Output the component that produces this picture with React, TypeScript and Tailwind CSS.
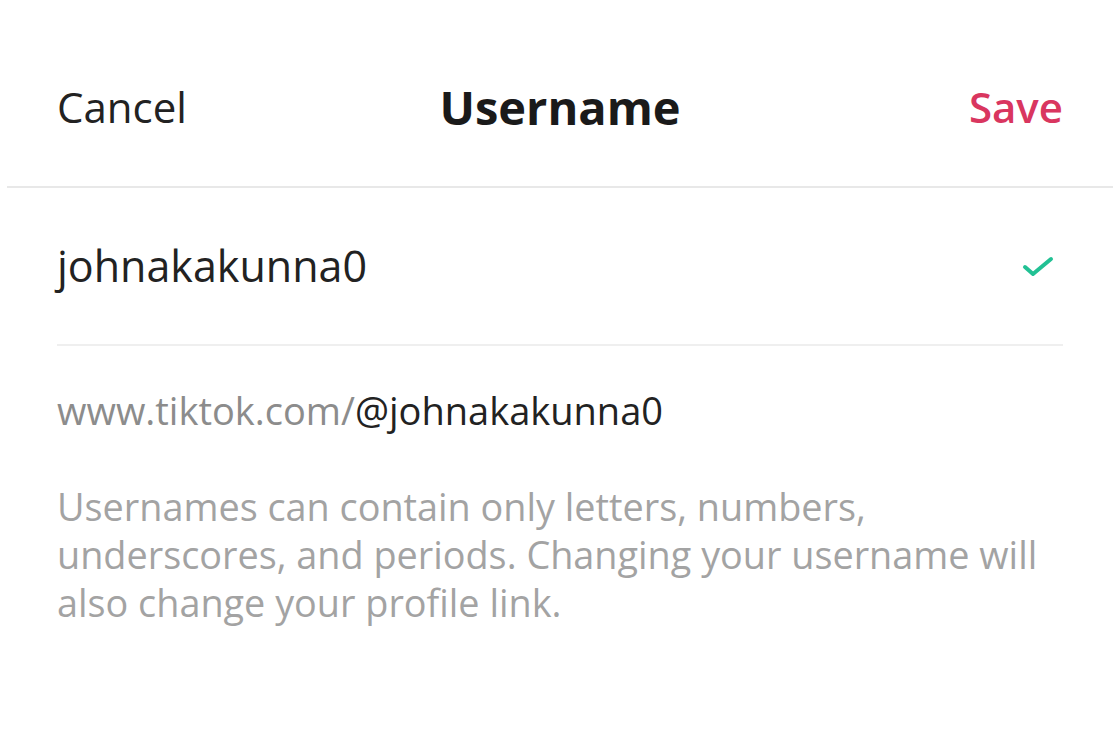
export default function App() {
  return (
    <div className="w-[1120px] h-[747px] bg-white font-['Open_Sans','Lato',sans-serif] text-[#222]">
      {/* Nav bar */}
      <header className="mx-[7px] h-[188px] pt-[27px] grid grid-cols-3 items-center border-b-2 border-[#e8e8e8] px-[50px]">
        <button className="justify-self-start text-[42px] leading-[56px] text-[#222]">Cancel</button>
        <h1 className="justify-self-center text-[47px] leading-[60px] font-bold text-[#1a1a1a]">Username</h1>
        <button className="justify-self-end text-[42px] leading-[56px] font-semibold text-[#d9365f]">Save</button>
      </header>

      {/* Input row */}
      <div className="mx-[57px] h-[158px] flex items-center justify-between border-b-2 border-[#efefef]">
        <span className="text-[43px] leading-[56px]">johnakakunna0</span>
        <svg width="36" height="28" viewBox="0 0 36 28" className="mr-[6px]">
          <path d="M4 15 L12 22 L30 7" fill="none" stroke="#22c194" strokeWidth="4" strokeLinecap="round" strokeLinejoin="round" />
        </svg>
      </div>

      <div className="mx-[57px] pt-[39px]">
        <p className="text-[38px] leading-[50px]">
          <span className="text-[#8c8c8c]">www.tiktok.com/</span>
          <span className="text-[#222]">@johnakakunna0</span>
        </p>
        <p className="mt-[48px] text-[37.8px] leading-[48px] text-[#a3a3a3]">
          Usernames can contain only letters, numbers,<br />
          underscores, and periods. Changing your username will<br />
          also change your profile link.
        </p>
      </div>
    </div>
  );
}
